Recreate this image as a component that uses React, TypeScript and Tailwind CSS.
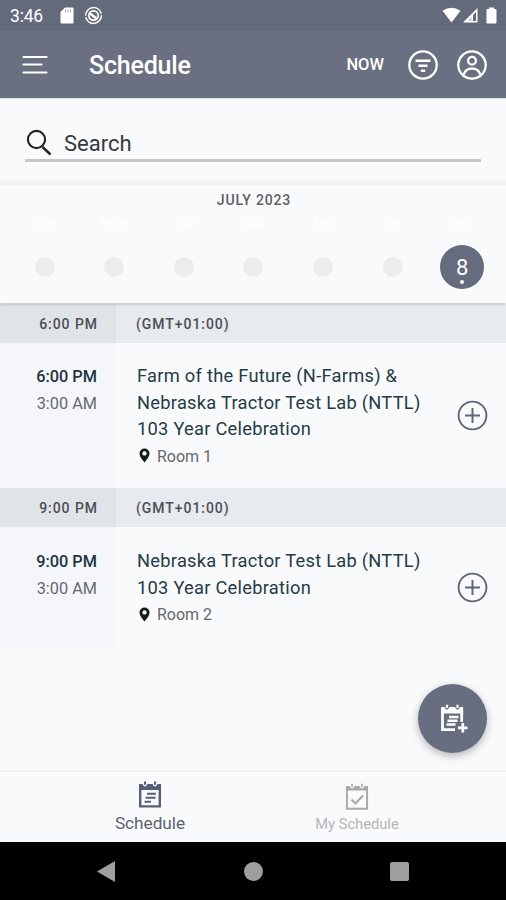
import React from "react";

const DAYS = ["SUN", "MON", "TUE", "WED", "THU", "FRI"];

function StatusBar() {
  return (
    <div className="flex h-[31px] items-center bg-[#636a7a] pl-[10px] pr-[8px] text-white">
      <span className="w-[50px] pt-[1px] text-[17.500px] leading-[30px] tracking-[-0.2px]">3:46</span>
      <svg className="block" width="14" height="17" viewBox="0 0 14 17">
        <path d="M5 0.5H12.5Q13.5 .5 13.5 1.5V15.5Q13.5 16.5 12.5 16.5H1.500Q.5 16.5 .5 15.500V5Z" fill="#fff" />
        <path d="M5.500 2.500v3M8 2.500v3M10.500 2.500v3" stroke="#a7acb8" strokeWidth="1" />
      </svg>
      <svg className="ml-[10px] block" width="19" height="19" viewBox="0 0 19 19" fill="none" stroke="#fff">
        <circle cx="9.500" cy="9.500" r="7.900" strokeWidth="1.500" strokeDasharray="23 1.500" />
        <circle cx="9.500" cy="9.500" r="4.700" strokeWidth="1.700" />
        <path d="M6 7.500L12.500 12.500" strokeWidth="2.600" />
      </svg>
      <div className="grow" />
      <svg className="block" width="56" height="17" viewBox="0 0 56 17">
        <path d="M.5 3.800Q9.500-2.500 18.500 3.800L9.500 15.500Z" fill="#fff" />
        <path d="M35.500 1V15.500H21Z" fill="#fff" />
        <path d="M34 5V14H31V8Z" fill="#636a7a" />
        <path d="M29.700 9.500V14H25.500Z" fill="#636a7a" opacity=".35" />
        <path d="M47 .5h5v1.500h1.500q1 0 1 1V15.500q0 1-1 1h-8q-1 0-1-1V3q0-1 1-1H47Z" fill="#fff" />
      </svg>
    </div>
  );
}

function AppBar() {
  return (
    <header className="flex h-[67px] items-center bg-[#6a7081] pl-[22px] pr-[19px] text-white">
      <svg className="block" width="26" height="20" viewBox="0 0 26 20" stroke="#fff" strokeWidth="2.200" strokeLinecap="round">
        <path d="M1.500 2H24.500M1.500 9.500H19.500M1.500 17.500H24.500" />
      </svg>
      <h1 className="ml-[41px] pt-[2px] text-[25px] font-medium leading-8 tracking-[-0.2px]">Schedule</h1>
      <div className="grow" />
      <span className="mr-[24px] pt-[2px] text-[16.500px] font-medium">NOW</span>
      <svg className="block" width="30" height="30" viewBox="0 0 30 30" fill="none" stroke="#fff" strokeWidth="2.300">
        <circle cx="15" cy="15" r="13.700" />
        <path d="M7.500 10.800H22.500M10.500 15.800H19.500M12.800 20.800H17.200" strokeWidth="2.500" />
      </svg>
      <svg className="ml-[19px] block" width="30" height="30" viewBox="0 0 30 30" fill="none" stroke="#fff" strokeWidth="2.300">
        <circle cx="15" cy="15" r="13.700" />
        <circle cx="15" cy="10.700" r="3.900" />
        <path d="M6.800 24.500C9 16.500 21 16.500 23.200 24.500" />
      </svg>
    </header>
  );
}

function SearchBox() {
  return (
    <div className="h-[84px] border-t border-[#dfe2e8] px-[25px] pt-[28px]">
      <div className="flex h-[35px] items-center border-b-[3px] border-[#c5c7cb]">
        <svg className="block" width="28" height="28" viewBox="0 0 28 28" fill="none" stroke="#202427">
          <circle cx="11.500" cy="10.500" r="8.600" strokeWidth="2.100" />
          <path d="M17.500 18L25.500 25.500" strokeWidth="2.400" />
        </svg>
        <span className="ml-[11px] pt-[2px] text-[22px] leading-8 text-[#36393d]">Search</span>
      </div>
    </div>
  );
}

function Calendar() {
  return (
    <section className="relative z-10 h-[121px] border-t-[3px] border-[#f0f1f3] bg-[#f9fafc] shadow-[0_1px_3px_rgba(0,0,0,0.250)]">
      <div className="pt-[6px] pl-[2px] text-center text-[14px] font-medium leading-[18px] tracking-[0.850px] text-[#5d6066]">JULY 2023</div>
      <div className="mt-[7px] grid grid-cols-7 pl-[10px] pr-[9px] text-center text-[11px] font-medium leading-[14px] text-white">
        {DAYS.map((d) => (
          <span key={d}>{d}</span>
        ))}
        <span>SAT</span>
      </div>
      <div className="mt-[14px] grid h-[46px] grid-cols-7 place-items-center pl-[10px] pr-[9px]">
        {DAYS.map((d) => (
          <span key={d} className="size-5 rounded-full bg-[#ececee]" />
        ))}
        <div className="flex size-[44px] flex-col items-center rounded-full bg-[#646c7e] pt-[11px] text-white">
          <span className="text-[22px] leading-[24px]">8</span>
          <span className="size-1 rounded-full bg-white" />
        </div>
      </div>
    </section>
  );
}

function HourRow({ time }: { time: string }) {
  return (
    <div className="flex h-[39px] items-center bg-[#e7eaee] text-[14px] font-medium leading-[40px] tracking-[0.950px] text-[#4b4f55]">
      <div className="h-[39px] w-[116px] bg-[#e0e3e8] pr-[18px] text-right">{time}</div>
      <div className="h-[39px] pl-[20px]">(GMT+01:00)</div>
    </div>
  );
}

type SessionProps = { start: string; lines: string[]; room: string; height: string; pad: string };

function Session({ start, lines, room, height, pad }: SessionProps) {
  return (
    <div className={`flex ${height}`}>
      <div className={`w-[116px] bg-[#f5f6f9] pr-[19px] text-right text-[16.300px] leading-[27px] ${pad}`}>
        <div className="font-medium text-[#20343e]">{start}</div>
        <div className="text-[#666a6f]">3:00 AM</div>
      </div>
      <div className={`grow pl-[21px] ${pad}`}>
        <div className="text-[18.300px] leading-[26.500px] tracking-[0.260px] text-[#263c45]">
          {lines.map((l) => (
            <div key={l} className="whitespace-nowrap">{l}</div>
          ))}
        </div>
        <div className="mt-[2px] flex items-center text-[16px] leading-6 text-[#65686d]">
          <svg className="mb-[2px] ml-[2px] mr-[7px] block" width="11" height="15" viewBox="0 0 11 15">
            <path fillRule="evenodd" fill="#16191c" d="M5.500 .5A5 5 0 0 0 .5 5.500C.5 9 5.500 14.500 5.500 14.500S10.500 9 10.500 5.500A5 5 0 0 0 5.500 .5ZM5.500 3.200a2.200 2.200 0 1 1 0 4.400a2.200 2.200 0 1 1 0-4.400Z" />
          </svg>
          {room}
        </div>
      </div>
      <div className="flex items-center pr-[18px]">
        <svg className="block" width="31" height="31" viewBox="0 0 31 31" fill="none" stroke="#5f6679" strokeWidth="1.900">
          <circle cx="15.500" cy="15.500" r="13.900" />
          <path d="M8 15.500H23M15.500 8V23" strokeWidth="2" />
        </svg>
      </div>
    </div>
  );
}

function BottomTabs() {
  return (
    <nav className="flex h-[72px] border-t-2 border-[#f0f1f3]">
      <div className="ml-[47px] flex w-[206px] flex-col items-center pt-[9px] text-[#5c6271]">
        <svg className="block" width="24" height="28" viewBox="0 0 24 28" fill="none" stroke="#575f78">
          <path d="M2.200 5V25.400H21.800V5" strokeWidth="2.400" />
          <path d="M1 3H4.500Q7 8 9.500 3H14.500Q17 8 19.500 3H23V9H1Z" fill="#575f78" stroke="none" />
          <path d="M7 .5V3.800M17 .5V3.800" strokeWidth="2" />
          <path d="M9 12.800H18M7.500 16.800H17.500M6.500 20.800H13" strokeWidth="2" />
        </svg>
        <span className="mt-[2px] text-[17.200px] leading-[24px]">Schedule</span>
      </div>
      <div className="flex w-[208px] flex-col items-center pt-[11px] text-[#b3b5b9]">
        <svg className="block" width="24" height="28" viewBox="0 0 24 28" fill="none" stroke="#a7a9ad">
          <path d="M1.900 5V25.800H22.100V5" strokeWidth="1.900" />
          <path d="M1 3H4.500Q7 8 9.500 3H14.500Q17 8 19.500 3H23V7.500H1Z" fill="#a7a9ad" stroke="none" />
          <path d="M7 .8V3.800M17 .8V3.800" strokeWidth="1.800" />
          <path d="M6.500 16.500L10.500 20.500L18 12.500" strokeWidth="2" />
        </svg>
        <span className="mt-[1px] text-[14.700px] leading-[24px]">My Schedule</span>
      </div>
    </nav>
  );
}

export default function App() {
  return (
    <div className="relative flex h-[900px] w-[506px] flex-col overflow-hidden bg-[#f9fafc] font-['Roboto',sans-serif]">
      <StatusBar />
      <AppBar />
      <SearchBox />
      <Calendar />
      <main className="h-[467px] pt-[1px]">
        <HourRow time="6:00 PM" />
        <Session
          start="6:00 PM"
          lines={["Farm of the Future (N-Farms) &", "Nebraska Tractor Test Lab (NTTL)", "103 Year Celebration"]}
          room="Room 1"
          height="h-[145px]"
          pad="pt-[20px]"
        />
        <HourRow time="9:00 PM" />
        <Session
          start="9:00 PM"
          lines={["Nebraska Tractor Test Lab (NTTL)", "103 Year Celebration"]}
          room="Room 2"
          height="h-[120px]"
          pad="pt-[21px]"
        />
      </main>
      <BottomTabs />
      <div className="flex h-[58px] items-center bg-black">
        <svg className="ml-[97px] block" width="18" height="21" viewBox="0 0 18 21">
          <path d="M0 10.500L18 0V21Z" fill="#9e9e9e" />
        </svg>
        <span className="ml-[129px] size-[19px] rounded-full bg-[#9e9e9e]" />
        <span className="ml-[127px] size-[19px] rounded-[2px] bg-[#9e9e9e]" />
      </div>
      <button className="absolute left-[418px] top-[684px] flex size-[69px] items-center justify-center rounded-full bg-[#666e80] shadow-[0_3px_8px_rgba(0,0,0,0.280)]">
        <svg className="block" width="30" height="30" viewBox="0 0 30 30" fill="none" stroke="#fff">
          <path d="M4.500 5V25.700H17M23.700 5V18" strokeWidth="2.800" />
          <path d="M3.100 3H6.500Q9 8.500 11.500 3H17Q19.500 8.500 22 3H25.100V9.500H3.100Z" fill="#fff" stroke="none" />
          <path d="M9 .8V4M19.500 .8V4" strokeWidth="2.200" />
          <path d="M11 13H20.500M9.500 16.800H19.500M8.500 20.600H17.500" strokeWidth="2.500" />
          <path d="M20 23.800H29.500M24.800 19V28.600" strokeWidth="2.700" />
        </svg>
      </button>
    </div>
  );
}
